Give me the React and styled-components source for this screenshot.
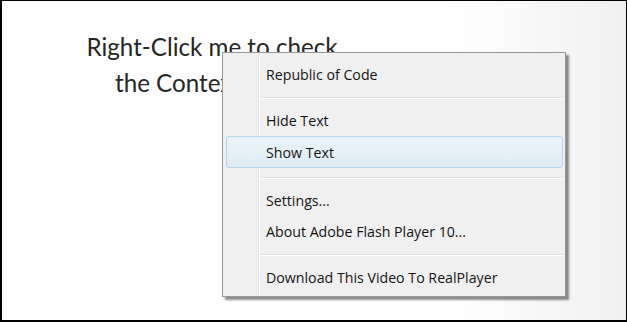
import React from "react";
import styled, { createGlobalStyle } from "styled-components";

const Global = createGlobalStyle`
  html, body {
    margin: 0;
    padding: 0;
    background: #fff;
  }
`;

const Frame = styled.div`
  position: relative;
  box-sizing: border-box;
  width: 627px;
  height: 322px;
  border: 1px solid #000;
  border-left-width: 2px;
  border-bottom-width: 2px;
  background: linear-gradient(to right, #fff 0%, #fff 72%, #f0f0f0 100%);
  overflow: hidden;
`;

const Heading = styled.div`
  width: 420px;
  padding-top: 28px;
  text-align: center;
  font-family: Lato, "Open Sans", sans-serif;
  font-size: 24.2px;
  line-height: 36px;
  color: #262626;
`;

const Menu = styled.div`
  position: absolute;
  left: 220px;
  top: 51px;
  width: 344px;
  box-sizing: border-box;
  padding: 6px 2px 3px 3px;
  border: 1px solid #979797;
  background: linear-gradient(
    to right,
    #f0f0f0 0 35px,
    #e2e3e3 35px 36px,
    #fff 36px 37px,
    #f0f0f0 37px
  );
  box-shadow: 3px 3px 2px rgba(0, 0, 0, 0.45);
  font-family: "Open Sans", "Noto Sans", sans-serif;
  font-size: 14.2px;
  color: #151515;
`;

const Item = styled.div`
  box-sizing: border-box;
  height: ${(p) => (p.$active ? 32 : 31)}px;
  margin-bottom: ${(p) => (p.$active ? 2 : 0)}px;
  display: flex;
  align-items: center;
  padding-left: 39px;
  border: 1px solid ${(p) => (p.$active ? "#b5d5e8" : "transparent")};
  border-radius: 3px;
  background: ${(p) =>
    p.$active ? "linear-gradient(to bottom, #eaf3f9, #dfecf4)" : "none"};
`;

const Separator = styled.div`
  height: 15px;
  display: flex;
  align-items: center;
  padding-left: 35px;

  &::after {
    content: "";
    flex: 1;
    height: 1px;
    background: #e0e0e0;
    border-bottom: 1px solid #fff;
  }
`;

const items = [
  "Republic of Code",
  "-",
  "Hide Text",
  "Show Text",
  "-",
  "Settings...",
  "About Adobe Flash Player 10...",
  "-",
  "Download This Video To RealPlayer",
];

export default function App() {
  return (
    <>
      <Global />
      <Frame>
        <Heading>
          Right-Click me to check
          <br />
          the Context Menu
        </Heading>
        <Menu>
          {items.map((label, i) =>
            label === "-" ? (
              <Separator key={i} />
            ) : (
              <Item key={i} $active={label === "Show Text"}>
                {label}
              </Item>
            )
          )}
        </Menu>
      </Frame>
    </>
  );
}
